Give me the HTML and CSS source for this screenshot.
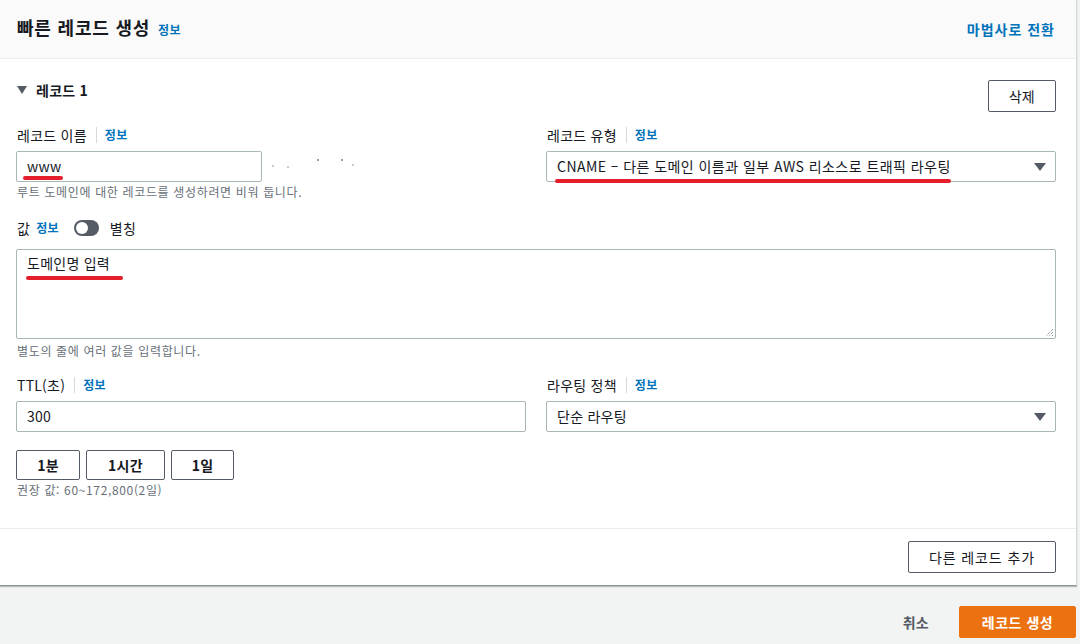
FILE: index.html
```html
<!DOCTYPE html>
<html lang="ko">
<head>
<meta charset="utf-8">
<title>빠른 레코드 생성</title>
<link rel="stylesheet" href="styles.css">
</head>
<body>
<div class="card">
  <div class="card-header">
    <h2 class="title">빠른 레코드 생성 <a class="info title-info">정보</a></h2>
    <a class="switch">마법사로 전환</a>
  </div>
  <div class="card-body">
    <div class="record-head">
      <div class="record-title"><span class="tri"></span>레코드 1</div>
      <button class="btn">삭제</button>
    </div>
    <div class="grid">
      <div class="field">
        <div class="label">레코드 이름<span class="sep"></span><a class="info">정보</a></div>
        <div class="input-row">
          <div class="input name-input">www<span class="mark mark-www"></span></div>
          <div class="redacted"><i class="d1"></i><i class="d2"></i><i class="d3"></i><i class="d4"></i><i class="d5"></i></div>
        </div>
        <div class="hint">루트 도메인에 대한 레코드를 생성하려면 비워 둡니다.</div>
      </div>
      <div class="field">
        <div class="label">레코드 유형<span class="sep"></span><a class="info">정보</a></div>
        <div class="select select-type">CNAME – 다른 도메인 이름과 일부 AWS 리소스로 트래픽 라우팅<span class="caret"></span><span class="mark mark-cname"></span></div>
      </div>
      <div class="field full">
        <div class="label value-label">값 <a class="info value-info">정보</a><span class="toggle"><span class="knob"></span></span>별칭</div>
        <div class="textarea">도메인명 입력<span class="mark mark-value"></span>
          <svg class="grip" width="9" height="9" viewBox="0 0 9 9"><path d="M8 1 L1 8 M8 4 L4 8 M8 7 L7 8" stroke="#5f6b7a" stroke-width="1" stroke-dasharray="1 1"/></svg>
        </div>
        <div class="hint hint-value">별도의 줄에 여러 값을 입력합니다.</div>
      </div>
      <div class="field">
        <div class="label">TTL(초)<span class="sep"></span><a class="info">정보</a></div>
        <div class="input">300</div>
        <div class="ttl-buttons">
          <button class="btn btn-bold btn-min">1분</button>
          <button class="btn btn-bold btn-hour">1시간</button>
          <button class="btn btn-bold btn-day">1일</button>
        </div>
        <div class="hint">권장 값: 60~172,800(2일)</div>
      </div>
      <div class="field">
        <div class="label">라우팅 정책<span class="sep"></span><a class="info">정보</a></div>
        <div class="select">단순 라우팅<span class="caret"></span></div>
      </div>
    </div>
  </div>
  <div class="card-footer">
    <button class="btn btn-add">다른 레코드 추가</button>
  </div>
</div>
<div class="actions">
  <a class="cancel">취소</a>
  <button class="btn-primary">레코드 생성</button>
</div>
</body>
</html>
```
FILE: styles.css
```css
* { box-sizing: border-box; }
html, body { margin: 0; padding: 0; }
body {
  background: #f2f3f3;
  font-family: "Noto Sans CJK KR", "Noto Sans", sans-serif;
  font-size: 14px;
  letter-spacing: 0.25px;
  color: #16191f;
  width: 1080px;
  height: 644px;
  overflow: hidden;
}
.card {
  width: 1077px;
  background: #fff;
  border-right: 1px solid #d5dbdb;
  border-bottom: 1px solid #879596;
  box-shadow: 0 1px 1px rgba(0, 28, 36, 0.25);
}
.card-header {
  height: 59px;
  background: #fafafa;
  border-bottom: 1px solid #eaeded;
  display: flex;
  align-items: center;
  justify-content: space-between;
  padding: 0 21px 0 17px;
}
.title {
  margin: 0;
  font-size: 18px;
  font-weight: 700;
  line-height: 24px;
  letter-spacing: 0.8px;
  margin-top: -2px;
}
.info {
  color: #0073bb;
  font-size: 12px;
  font-weight: 700;
  letter-spacing: 0.3px;
  cursor: pointer;
}
.title-info { margin-left: 2px; }
.switch {
  color: #0073bb;
  font-weight: 700;
  font-size: 14px;
  letter-spacing: 1px;
}
.card-body {
  padding: 21px 20px 30px 16px;
  border-bottom: 1px solid #eaeded;
}
.record-head {
  display: flex;
  justify-content: space-between;
  align-items: flex-start;
}
.record-title {
  display: flex;
  align-items: center;
  font-weight: 700;
  line-height: 20px;
  padding-left: 1px;
}
.tri {
  width: 0; height: 0;
  border-left: 5px solid transparent;
  border-right: 5px solid transparent;
  border-top: 8px solid #545b64;
  margin-right: 9px;
}
.btn {
  font-family: inherit;
  font-size: 14px;
  letter-spacing: 0.3px;
  color: #16191f;
  background: #fff;
  border: 1px solid #545b64;
  border-radius: 2px;
  height: 32px;
  padding: 0 20px;
  line-height: 30px;
}
.btn-bold { font-weight: 700; height: 30px; line-height: 28px; padding: 0; text-align: center; }
.btn-min { width: 64px; }
.btn-hour { width: 79px; }
.btn-day { width: 63px; }
.grid {
  display: grid;
  grid-template-columns: 510px 510px;
  column-gap: 20px;
  margin-top: 12px;
}
.field.full { grid-column: 1 / span 2; }
.label {
  display: flex;
  align-items: center;
  line-height: 22px;
  height: 22px;
  padding-left: 1px;
}
.sep {
  width: 1px;
  height: 16px;
  background: #d5dbdb;
  margin: 0 8px 0 9px;
}
.input, .select, .textarea {
  position: relative;
  border: 1px solid #aab7b8;
  border-radius: 2px;
  background: #fff;
  margin-top: 5px;
}
.input, .select {
  height: 31px;
  line-height: 29px;
  padding: 0 10px;
}
.select-type { letter-spacing: 0.45px; }
.input-row {
  display: flex;
  align-items: flex-start;
}
.name-input { width: 246px; }
.redacted {
  display: flex;
  margin-top: 13px;
  margin-left: 10px;
}
.redacted i { display: block; width: 2px; height: 2px; background: #c8ccd0; }
.redacted .d1 { margin-top: 6px; }
.redacted .d2 { margin-left: 13px; margin-top: 7px; }
.redacted .d3 { margin-left: 28px; margin-top: 0; background: #9aa0a6; }
.redacted .d4 { margin-left: 22px; margin-top: 0; background: #9aa0a6; }
.redacted .d5 { margin-left: 9px; margin-top: 5px; }
.select { padding-right: 40px; }
.caret {
  position: absolute;
  right: 9px;
  top: 11px;
  width: 0; height: 0;
  border-left: 6px solid transparent;
  border-right: 6px solid transparent;
  border-top: 8px solid #545b64;
}
.hint {
  color: #687078;
  font-size: 12px;
  letter-spacing: 0.65px;
  line-height: 16px;
  margin-top: 2px;
  padding-left: 1px;
}
.value-label { margin-top: 17px; }
.value-info { margin-left: 6px; }
.toggle {
  position: relative;
  width: 25px;
  height: 16px;
  border-radius: 8px;
  background: #545b64;
  margin: 0 11px 0 15px;
}
.knob {
  position: absolute;
  left: 2px;
  top: 2px;
  width: 12px;
  height: 12px;
  border-radius: 50%;
  background: #fff;
}
.textarea {
  height: 90px;
  margin-top: 10px;
  padding: 2px 10px;
  line-height: 22px;
}
.grip { position: absolute; right: 1px; bottom: 1px; }
.hint-value { margin-top: 4px; }
.field:nth-child(4), .field:nth-child(5) { margin-top: 15px; }
.ttl-buttons {
  display: flex;
  gap: 6px;
  margin-top: 18px;
}
.mark {
  position: absolute;
  height: 4px;
  background: #e41e2b;
  border-radius: 2px;
}
.mark-www { left: 6px; width: 40px; top: 24px; }
.mark-cname { left: 8px; width: 396px; top: 27px; }
.mark-value { left: 9px; width: 97px; top: 26px; }
.card-footer {
  display: flex;
  justify-content: flex-end;
  padding: 12px 20px 12px 0;
}
.btn-add { padding: 0 20px; letter-spacing: 0.9px; }
.actions {
  display: flex;
  justify-content: flex-end;
  align-items: center;
  padding: 20px 4px 0 0;
}
.cancel {
  font-weight: 700;
  color: #545b64;
  margin-right: 30px;
}
.btn-primary {
  font-family: inherit;
  font-size: 14px;
  font-weight: 700;
  letter-spacing: 0.5px;
  color: #fff;
  background: #ec7211;
  border: 1px solid #ec7211;
  border-radius: 2px;
  height: 32px;
  width: 117px;
}
```
